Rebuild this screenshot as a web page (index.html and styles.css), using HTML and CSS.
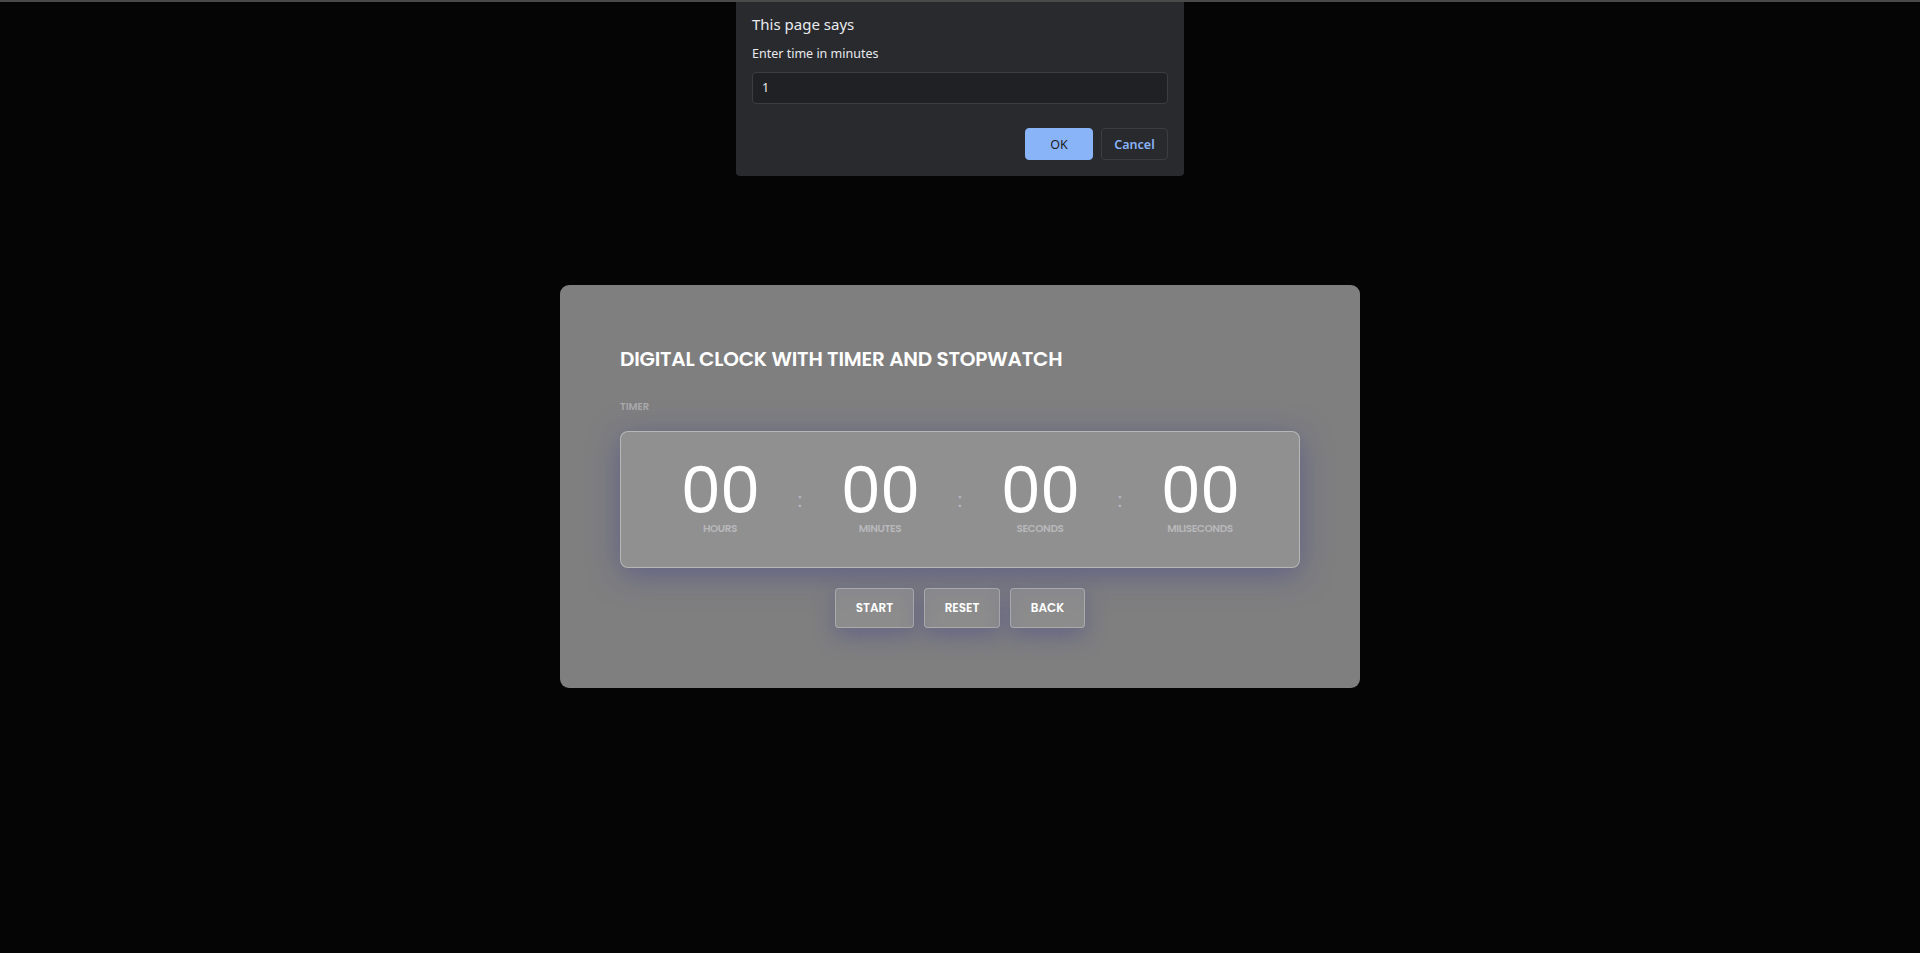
FILE: index.html
```html
<!DOCTYPE html>
<html lang="en">
<head>
<meta charset="utf-8">
<title>Digital Clock</title>
<link rel="stylesheet" href="styles.css">
</head>
<body>
<div class="topline"></div>
<div class="dialog">
  <div class="dlg-title">This page says</div>
  <div class="dlg-msg">Enter time in minutes</div>
  <div class="dlg-input">1</div>
  <div class="dlg-actions">
    <button class="dlg-ok">OK</button>
    <button class="dlg-cancel">Cancel</button>
  </div>
</div>
<main class="stage">
  <section class="card">
    <h1 class="title">DIGITAL CLOCK WITH TIMER AND STOPWATCH</h1>
    <div class="section-label">TIMER</div>
    <div class="display">
      <div class="unit"><div class="num">00</div><div class="lbl">HOURS</div></div>
      <div class="colon">:</div>
      <div class="unit"><div class="num">00</div><div class="lbl">MINUTES</div></div>
      <div class="colon">:</div>
      <div class="unit"><div class="num">00</div><div class="lbl">SECONDS</div></div>
      <div class="colon">:</div>
      <div class="unit"><div class="num">00</div><div class="lbl">MILISECONDS</div></div>
    </div>
    <div class="controls">
      <button class="btn btn-start">START</button>
      <button class="btn btn-reset">RESET</button>
      <button class="btn btn-back">BACK</button>
    </div>
  </section>
</main>
</body>
</html>
```
FILE: styles.css
```css
* { box-sizing: border-box; }
html, body { margin: 0; padding: 0; }
body {
  background: #050505;
  height: 953px;
  overflow: hidden;
  font-family: "Poppins", "Inter", "Noto Sans", sans-serif;
}
.topline {
  height: 2px;
  background: #4a4a4a;
}
.dialog {
  position: absolute;
  top: 2px;
  left: 736px;
  width: 448px;
  height: 174px;
  background: #292a2d;
  border-radius: 0 0 4px 4px;
  padding: 12px 16px 0 16px;
  font-family: "Noto Sans", "Open Sans", sans-serif;
  color: #e8eaed;
  z-index: 5;
}
.dlg-title { font-size: 15px; line-height: 20px; }
.dlg-msg { font-size: 12.5px; line-height: 17px; margin-top: 11px; }
.dlg-input {
  margin-top: 10px;
  height: 32px;
  background: #202124;
  border: 1px solid #3c3d40;
  border-radius: 4px;
  padding: 0 9px;
  font-size: 12.5px;
  line-height: 30px;
  color: #e8eaed;
}
.dlg-actions {
  display: flex;
  justify-content: flex-end;
  gap: 8px;
  margin-top: 24px;
}
.dlg-ok, .dlg-cancel {
  height: 32px;
  border-radius: 4px;
  font-family: "Noto Sans", "Open Sans", sans-serif;
  font-size: 12.5px;
  padding: 0;
}
.dlg-ok {
  width: 68px;
  background: #8ab4f8;
  border: 1px solid #8ab4f8;
  color: #202124;
}
.dlg-cancel {
  width: 67px;
  background: #292a2d;
  border: 1px solid #3c3d40;
  color: #8ab4f8;
  font-weight: 600;
}
.stage {
  display: flex;
  justify-content: center;
  padding-top: 283px;
}
.card {
  width: 800px;
  height: 403px;
  background: #7f7f80;
  border-radius: 9px;
  padding: 59px 60px 60px 60px;
}
.title {
  margin: 0;
  color: #ffffff;
  font-size: 20px;
  line-height: 30px;
  font-weight: 600;
  letter-spacing: -0.2px;
}
.section-label {
  margin-top: 27px;
  color: #a9a9ab;
  font-size: 10px;
  font-weight: 600;
  line-height: 12px;
}
.display {
  margin-top: 18px;
  height: 137px;
  background: #909091;
  border: 1px solid rgba(255,255,255,0.35);
  border-radius: 8px;
  box-shadow: 0 6px 30px rgba(70, 70, 140, 0.55);
  display: flex;
  justify-content: center;
  align-items: flex-start;
  padding-top: 27px;
}
.unit {
  width: 120px;
  display: flex;
  flex-direction: column;
  align-items: center;
}
.num {
  color: #ffffff;
  font-size: 64px;
  line-height: 64px;
  font-weight: 400;
  letter-spacing: -1px;
}
.lbl {
  color: #b8b8ba;
  font-size: 10.5px;
  line-height: 12px;
  font-weight: 600;
  letter-spacing: -0.4px;
}
.colon {
  width: 40px;
  text-align: center;
  color: #b8b8ba;
  font-size: 20px;
  line-height: 20px;
  margin-top: 31px;
}
.controls {
  display: flex;
  justify-content: center;
  gap: 10px;
  margin-top: 20px;
}
.btn {
  height: 40px;
  background: rgba(255,255,255,0.1);
  border: 1px solid rgba(255,255,255,0.28);
  border-radius: 4px;
  color: #ffffff;
  font-family: "Poppins", "Inter", "Noto Sans", sans-serif;
  font-size: 12px;
  font-weight: 600;
  padding: 0;
  box-shadow: 0 8px 22px rgba(70, 70, 140, 0.45);
}
.btn-start { width: 79px; }
.btn-reset { width: 76px; }
.btn-back { width: 75px; }
```
